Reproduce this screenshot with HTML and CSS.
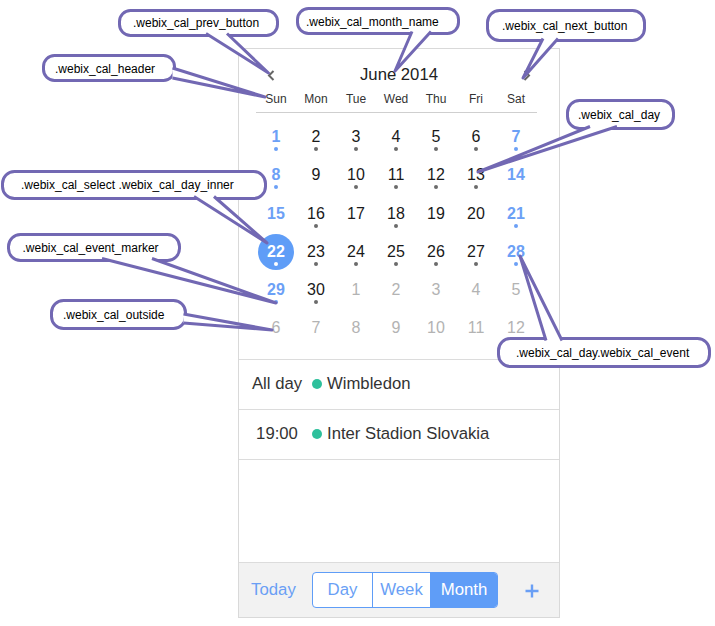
FILE: index.html
```html
<!DOCTYPE html>
<html>
<head>
<meta charset="utf-8">
<title>Webix calendar classes</title>
<link rel="stylesheet" href="styles.css">
</head>
<body>
<div class="page">
  <div class="phone">
    <div class="cal">
      <div class="cal-head">
        <div class="nav"><svg width="8" height="11" viewBox="0 0 8 11"><polyline points="6.5,1 2,5.5 6.5,10" fill="none" stroke="#666" stroke-width="2"/></svg></div>
        <div class="month">June 2014</div>
        <div class="nav"><svg width="8" height="11" viewBox="0 0 8 11"><polyline points="1.5,1 6,5.5 1.5,10" fill="none" stroke="#666" stroke-width="2"/></svg></div>
      </div>
      <div class="dow"><span>Sun</span><span>Mon</span><span>Tue</span><span>Wed</span><span>Thu</span><span>Fri</span><span>Sat</span></div>
      <div class="days">
        <div class="day we"><span class="inner">1<i class="marker"></i></span></div>
        <div class="day"><span class="inner">2<i class="marker"></i></span></div>
        <div class="day"><span class="inner">3<i class="marker"></i></span></div>
        <div class="day"><span class="inner">4<i class="marker"></i></span></div>
        <div class="day"><span class="inner">5<i class="marker"></i></span></div>
        <div class="day"><span class="inner">6<i class="marker"></i></span></div>
        <div class="day we"><span class="inner">7<i class="marker"></i></span></div>

        <div class="day we"><span class="inner">8<i class="marker"></i></span></div>
        <div class="day"><span class="inner">9</span></div>
        <div class="day"><span class="inner">10<i class="marker"></i></span></div>
        <div class="day"><span class="inner">11<i class="marker"></i></span></div>
        <div class="day"><span class="inner">12<i class="marker"></i></span></div>
        <div class="day"><span class="inner">13<i class="marker"></i></span></div>
        <div class="day we"><span class="inner">14</span></div>

        <div class="day we"><span class="inner">15</span></div>
        <div class="day"><span class="inner">16<i class="marker"></i></span></div>
        <div class="day"><span class="inner">17</span></div>
        <div class="day"><span class="inner">18<i class="marker"></i></span></div>
        <div class="day"><span class="inner">19</span></div>
        <div class="day"><span class="inner">20</span></div>
        <div class="day we"><span class="inner">21<i class="marker"></i></span></div>

        <div class="day we sel"><span class="inner">22<i class="marker"></i></span></div>
        <div class="day"><span class="inner">23<i class="marker"></i></span></div>
        <div class="day"><span class="inner">24<i class="marker"></i></span></div>
        <div class="day"><span class="inner">25<i class="marker"></i></span></div>
        <div class="day"><span class="inner">26<i class="marker"></i></span></div>
        <div class="day"><span class="inner">27<i class="marker"></i></span></div>
        <div class="day we"><span class="inner">28<i class="marker"></i></span></div>

        <div class="day we"><span class="inner">29<i class="marker"></i></span></div>
        <div class="day"><span class="inner">30<i class="marker"></i></span></div>
        <div class="day out"><span class="inner">1</span></div>
        <div class="day out"><span class="inner">2</span></div>
        <div class="day out"><span class="inner">3</span></div>
        <div class="day out"><span class="inner">4</span></div>
        <div class="day out"><span class="inner">5</span></div>

        <div class="day out"><span class="inner">6</span></div>
        <div class="day out"><span class="inner">7</span></div>
        <div class="day out"><span class="inner">8</span></div>
        <div class="day out"><span class="inner">9</span></div>
        <div class="day out"><span class="inner">10</span></div>
        <div class="day out"><span class="inner">11</span></div>
        <div class="day out"><span class="inner">12</span></div>
      </div>
    </div>
    <div class="events">
      <div class="event"><span class="time">All day</span><span class="dot"></span><span class="title">Wimbledon</span></div>
      <div class="event"><span class="time">19:00</span><span class="dot"></span><span class="title">Inter Stadion Slovakia</span></div>
    </div>
    <div class="footer">
      <span class="today">Today</span>
      <div class="seg">
        <span class="seg-btn day-btn">Day</span>
        <span class="seg-btn week-btn">Week</span>
        <span class="seg-btn month-btn active">Month</span>
      </div>
      <span class="plus"><svg width="14" height="14" viewBox="0 0 14 14"><path d="M7 0.5V13.5M0.5 7H13.5" stroke="#6a9ff5" stroke-width="2.4" fill="none"/></svg></span>
    </div>
  </div>

  <svg class="notes" width="715" height="626" viewBox="0 0 715 626">
    <g class="callout">
      <rect x="119.5" y="10.5" width="158" height="25" rx="11"/>
      <polyline points="206,33.5 268.5,73 227,33.5"/>
      <text x="133" y="23">.webix_cal_prev_button</text>
    </g>
    <g class="callout">
      <rect x="297.5" y="8.5" width="161" height="25" rx="11"/>
      <polyline points="412,31.5 395,71 431,31.5"/>
      <text x="306" y="21.5">.webix_cal_month_name</text>
    </g>
    <g class="callout">
      <rect x="487.5" y="10.5" width="157" height="30" rx="12"/>
      <polyline points="543,38.5 523,78 558,38.5"/>
      <text x="502" y="25.5">.webix_cal_next_button</text>
    </g>
    <g class="callout">
      <rect x="43.5" y="55.5" width="131" height="25" rx="11"/>
      <polyline points="172.5,68 265,97 172.5,78"/>
      <text x="55" y="68.5">.webix_cal_header</text>
    </g>
    <g class="callout">
      <rect x="567.5" y="100.5" width="106" height="28" rx="12"/>
      <polyline points="590,126.5 478,172 617,126.5"/>
      <text x="578" y="114.5">.webix_cal_day</text>
    </g>
    <g class="callout">
      <rect x="2.5" y="171.5" width="263" height="27" rx="12"/>
      <polyline points="194,196.5 267,243 214,196.5"/>
      <text x="21" y="185">.webix_cal_select .webix_cal_day_inner</text>
    </g>
    <g class="callout">
      <rect x="8.5" y="234.5" width="171" height="26" rx="12"/>
      <polyline points="102,258.5 276,303 152,258.5"/>
      <text x="22.5" y="248">.webix_cal_event_marker</text>
    </g>
    <g class="callout">
      <rect x="51.5" y="300.5" width="134" height="28" rx="12"/>
      <polyline points="183.5,314 272,330 183.5,323"/>
      <text x="63" y="315">.webix_cal_outside</text>
    </g>
    <g class="callout">
      <rect x="498.5" y="338.5" width="211" height="28" rx="12"/>
      <polyline points="546,340.5 520,256 562,340.5"/>
      <text x="516" y="352.5">.webix_cal_day.webix_cal_event</text>
    </g>
  </svg>
</div>
</body>
</html>
```

FILE: styles.css
```css
* { box-sizing: border-box; }
html, body { margin: 0; padding: 0; background: #fff; }
body { font-family: "Liberation Sans", Arial, sans-serif; color: #222; }

.page {
  position: relative;
  width: 715px;
  height: 626px;
  overflow: hidden;
  padding: 48px 0 0 238px;
}

.phone {
  width: 322px;
  height: 570px;
  border: 1px solid #d9d9d9;
  display: flex;
  flex-direction: column;
  background: #fff;
}

.cal {
  border-bottom: 1px solid #dcdcdc;
  padding-bottom: 11px;
}

.cal-head {
  display: flex;
  align-items: center;
  height: 24px;
  margin-top: 14px;
  padding: 0 20px;
}
.nav {
  width: 24px;
  height: 24px;
  display: flex;
  align-items: center;
  justify-content: center;
}
.month {
  flex: 1;
  text-align: center;
  font-size: 16.7px;
  line-height: 24px;
  color: #222;
}

.dow {
  display: grid;
  grid-template-columns: repeat(7, 40px);
  margin: 2px 22px 0 17px;
  height: 24px;
  line-height: 20px;
  border-bottom: 1px solid #cfcfcf;
  font-size: 12px;
  color: #333;
  text-align: center;
}

.days {
  display: grid;
  grid-template-columns: repeat(7, 40px);
  grid-auto-rows: 38.3px;
  padding: 5px 22px 0 17px;
}
.day {
  display: flex;
  justify-content: center;
  padding-top: 1px;
}
.inner {
  position: relative;
  display: block;
  width: 36px;
  height: 36px;
  border-radius: 50%;
  line-height: 36px;
  text-align: center;
  font-size: 16px;
  color: #1a1a1a;
}
.marker {
  position: absolute;
  left: 16px;
  top: 28px;
  width: 4px;
  height: 4px;
  border-radius: 50%;
  background: #6b6b6b;
}
.we .inner { color: #6ca0f6; font-weight: bold; }
.we .marker { background: #6ca0f6; }
.sel .inner { background: #5f9df7; color: #fff; }
.sel .marker { background: #fff; }
.out .inner { color: #b3b3b3; font-weight: normal; }

.events { flex: 1; }
.event {
  display: flex;
  align-items: center;
  height: 50px;
  border-bottom: 1px solid #dcdcdc;
  padding-left: 12px;
  font-size: 16.7px;
  color: #333;
}
.time { width: 52px; text-align: center; }
.dot {
  width: 10px;
  height: 10px;
  border-radius: 50%;
  background: #2ec09c;
  margin: 0 5px 0 9px;
}

.footer {
  height: 55px;
  border-top: 1px solid #dcdcdc;
  background: #f2f2f2;
  display: flex;
  align-items: center;
  padding: 0 20px 0 12px;
}
.today {
  width: 61px;
  font-size: 16.8px;
  color: #6a9ff5;
}
.seg {
  display: flex;
  height: 36px;
  border: 1px solid #5f9df7;
  border-radius: 4px;
  overflow: hidden;
  background: #fff;
}
.seg-btn {
  font-size: 16.8px;
  line-height: 34px;
  text-align: center;
  color: #6a9ff5;
}
.day-btn { width: 59px; }
.week-btn { width: 58px; border-left: 1px solid #5f9df7; }
.month-btn { width: 67px; border-left: 1px solid #5f9df7; }
.seg-btn.active { background: #5f9df7; color: #fff; }
.plus {
  margin-left: auto;
  width: 14px;
  height: 14px;
  display: flex;
  margin-top: 2px;
}

.notes {
  position: absolute;
  left: 0;
  top: 0;
  pointer-events: none;
}
.callout rect {
  fill: #fff;
  stroke: #7268b3;
  stroke-width: 3;
}
.callout polyline {
  fill: #fff;
  stroke: #7268b3;
  stroke-width: 3;
  stroke-linejoin: round;
}
.callout text {
  font-family: "Liberation Sans", Arial, sans-serif;
  font-size: 12px;
  fill: #000;
  dominant-baseline: central;
}
```
